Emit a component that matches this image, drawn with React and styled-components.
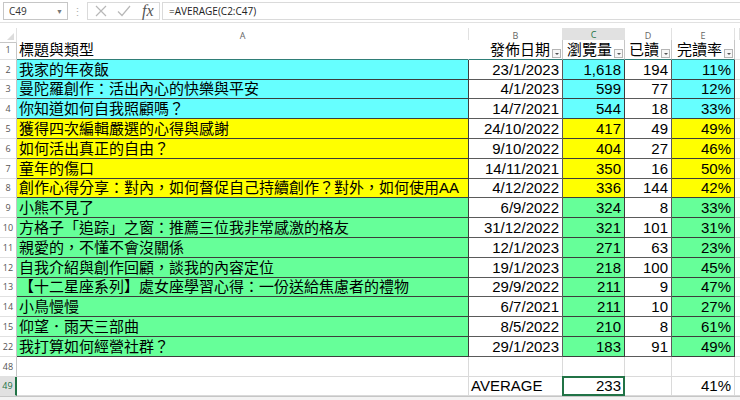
import React from "react";
import styled, { createGlobalStyle, css } from "styled-components";

const GlobalStyle = createGlobalStyle`
  html, body {
    margin: 0;
    padding: 0;
    background: #ffffff;
    overflow: hidden;
  }
  body {
    font-family: "Liberation Sans", "Noto Sans CJK TC", sans-serif;
  }
`;

const COLS = "17px 452px 94px 62px 47px 63px 1fr";
const ROW_H = "19.8px";

const FILLS = {
  cyan: "#66ffff",
  yellow: "#ffff00",
  green: "#66ff99",
};

const rows = [
  ["2", "我家的年夜飯", "23/1/2023", "1,618", "194", "11%", "cyan"],
  ["3", "曼陀羅創作：活出內心的快樂與平安", "4/1/2023", "599", "77", "12%", "cyan"],
  ["4", "你知道如何自我照顧嗎？", "14/7/2021", "544", "18", "33%", "cyan"],
  ["5", "獲得四次編輯嚴選的心得與感謝", "24/10/2022", "417", "49", "49%", "yellow"],
  ["6", "如何活出真正的自由？", "9/10/2022", "404", "27", "46%", "yellow"],
  ["7", "童年的傷口", "14/11/2021", "350", "16", "50%", "yellow"],
  ["8", "創作心得分享：對內，如何督促自己持續創作？對外，如何使用AA", "4/12/2022", "336", "144", "42%", "yellow"],
  ["9", "小熊不見了", "6/9/2022", "324", "8", "33%", "green"],
  ["10", "方格子「追踪」之窗：推薦三位我非常感激的格友", "31/12/2022", "321", "101", "31%", "green"],
  ["11", "親愛的，不懂不會沒關係", "12/1/2023", "271", "63", "23%", "green"],
  ["12", "自我介紹與創作回顧，談我的內容定位", "19/1/2023", "218", "100", "45%", "green"],
  ["13", "【十二星座系列】處女座學習心得：一份送給焦慮者的禮物", "29/9/2022", "211", "9", "47%", "green"],
  ["14", "小鳥慢慢", "6/7/2021", "211", "10", "27%", "green"],
  ["15", "仰望．雨天三部曲", "8/5/2022", "210", "8", "61%", "green"],
  ["22", "我打算如何經營社群？", "29/1/2023", "183", "91", "49%", "green"],
];

/* ---------- formula bar ---------- */

const Toolbar = styled.div`
  display: flex;
  align-items: center;
  height: 23px;
  padding: 0 0 0 3px;
  box-sizing: border-box;
  border-bottom: 1px solid #e1e1e1;
  background: #ffffff;
  font-family: "Open Sans", "Liberation Sans", sans-serif;
`;

const NameBox = styled.div`
  display: flex;
  align-items: center;
  justify-content: space-between;
  width: 65px;
  height: 18px;
  box-sizing: border-box;
  border: 1px solid #c6c6c6;
  padding: 0 4px 0 5px;
  font-size: 10px;
  color: #333;
`;

const Arrow = styled.span`
  font-size: 7px;
  color: #777;
`;

const Dots = styled.div`
  width: 19px;
  text-align: center;
  color: #b0b0b0;
  font-size: 11px;
`;

const FxGroup = styled.div`
  display: flex;
  align-items: center;
  gap: 10px;
  width: 73px;
  height: 18px;
  box-sizing: border-box;
  border: 1px solid #dadada;
  padding: 0 0 0 7px;
`;

const Fx = styled.span`
  font-family: "Liberation Serif", serif;
  font-style: italic;
  font-size: 16px;
  color: #555;
  line-height: 1;
  margin-left: 1px;
`;

const FormulaInput = styled.div`
  flex: 1;
  display: flex;
  align-items: center;
  height: 18px;
  box-sizing: border-box;
  border: 1px solid #dadada;
  border-right: none;
  margin-left: 2px;
  padding-left: 6px;
  font-size: 10px;
  color: #222;
`;

/* ---------- sheet ---------- */

const Spacer = styled.div`
  height: 5px;
`;

const Row = styled.div`
  display: grid;
  grid-template-columns: ${COLS};
  height: ${(p) => p.$h || ROW_H};
`;

const ColHead = styled.div`
  display: flex;
  align-items: center;
  justify-content: center;
  box-sizing: border-box;
  border-right: 1px solid #e1e1e1;
  border-bottom: 1px solid #c6c6c6;
  font-family: "Open Sans", "Liberation Sans", sans-serif;
  font-size: 9px;
  color: #666;
  ${(p) =>
    p.$active &&
    css`
      background: #e1e1e1;
      color: #217346;
      border-bottom: 2px solid #217346;
    `}
`;

const Corner = styled(ColHead)`
  position: relative;
  &::after {
    content: "";
    position: absolute;
    right: 2px;
    bottom: 2px;
    border-left: 7px solid transparent;
    border-bottom: 7px solid #dcdcdc;
  }
`;

const RowHead = styled.div`
  display: flex;
  align-items: flex-end;
  justify-content: center;
  padding-bottom: 3px;
  box-sizing: border-box;
  border-right: 1px solid #c6c6c6;
  border-bottom: 1px solid #e1e1e1;
  font-family: "Open Sans", "Liberation Sans", sans-serif;
  font-size: 9px;
  color: #555;
  ${(p) =>
    p.$active &&
    css`
      background: #e1e1e1;
      color: #217346;
      border-right: 2px solid #217346;
    `}
`;

const Cell = styled.div`
  position: relative;
  display: flex;
  align-items: flex-end;
  justify-content: ${(p) => (p.$right ? "flex-end" : "flex-start")};
  box-sizing: border-box;
  padding: 0 ${(p) => (p.$pr != null ? p.$pr : 3)}px 0 2px;
  overflow: hidden;
  white-space: nowrap;
  font-size: 15px;
  line-height: 18px;
  color: #000;
  background: ${(p) => (p.$fill ? FILLS[p.$fill] : "#ffffff")};
  border-right: 1px solid ${(p) => p.$line || "#3c3c3c"};
  border-bottom: 1px solid ${(p) => p.$bottom || p.$line || "#3c3c3c"};
`;

const FilterButton = styled.span`
  position: absolute;
  right: 1px;
  bottom: 1px;
  width: 9px;
  height: 9px;
  box-sizing: border-box;
  border: 1px solid #b5b5b5;
  background: #f7f7f7;
  &::after {
    content: "";
    position: absolute;
    left: 2px;
    top: 3px;
    border-left: 2px solid transparent;
    border-right: 2px solid transparent;
    border-top: 2px solid #555;
  }
`;

const Selected = styled.div`
  position: absolute;
  inset: -1px -1px -1px -1px;
  border: 2px solid #217346;
  pointer-events: none;
`;

const TabBar = styled.div`
  height: 6px;
  border-top: 1px solid #c6c6c6;
  background: #f3f3f3;
`;

function XIcon() {
  return (
    <svg width="12" height="12" viewBox="0 0 12 12">
      <path d="M1 1 L11 11 M11 1 L1 11" stroke="#b8b8b8" strokeWidth="1.2" fill="none" />
    </svg>
  );
}

function CheckIcon() {
  return (
    <svg width="14" height="12" viewBox="0 0 14 12">
      <path d="M1 6.5 L5 10.5 L13 1" stroke="#b8b8b8" strokeWidth="1.2" fill="none" />
    </svg>
  );
}

function HeaderCell({ children }) {
  return (
    <Cell $right $pr={12} $line="#c6c6c6" $bottom="#2f7f78">
      {children}
      <FilterButton />
    </Cell>
  );
}

export default function App() {
  return (
    <>
      <GlobalStyle />
      <Toolbar>
        <NameBox>
          C49
          <Arrow>▼</Arrow>
        </NameBox>
        <Dots>⋮</Dots>
        <FxGroup>
          <XIcon />
          <CheckIcon />
          <Fx>fx</Fx>
        </FxGroup>
        <FormulaInput>=AVERAGE(C2:C47)</FormulaInput>
      </Toolbar>
      <Spacer />
      <Row $h="12px">
        <Corner />
        <ColHead>A</ColHead>
        <ColHead>B</ColHead>
        <ColHead $active>C</ColHead>
        <ColHead>D</ColHead>
        <ColHead>E</ColHead>
        <ColHead />
      </Row>
      <Row>
        <RowHead>1</RowHead>
        <Cell $line="#ffffff" $bottom="#2f7f78">標題與類型</Cell>
        <HeaderCell>發佈日期</HeaderCell>
        <HeaderCell>瀏覽量</HeaderCell>
        <HeaderCell>已讀</HeaderCell>
        <HeaderCell>完讀率</HeaderCell>
        <Cell $line="#e1e1e1" />
      </Row>
      {rows.map(([n, title, date, views, read, rate, fill]) => (
        <Row key={n}>
          <RowHead>{n}</RowHead>
          <Cell $fill={fill}>{title}</Cell>
          <Cell $right $line="#5a5a5a">{date}</Cell>
          <Cell $right $fill={fill}>{views}</Cell>
          <Cell $right $line="#5a5a5a">{read}</Cell>
          <Cell $right $fill={fill}>{rate}</Cell>
          <Cell $line="#e1e1e1" />
        </Row>
      ))}
      <Row>
        <RowHead>48</RowHead>
        <Cell $line="#dadada" />
        <Cell $line="#dadada" />
        <Cell $line="#dadada" />
        <Cell $line="#dadada" />
        <Cell $line="#dadada" />
        <Cell $line="#dadada" />
      </Row>
      <Row>
        <RowHead $active>49</RowHead>
        <Cell $line="#dadada" />
        <Cell $line="#dadada">AVERAGE</Cell>
        <Cell $right $line="#dadada" style={{ overflow: "visible" }}>
          233
          <Selected />
        </Cell>
        <Cell $line="#dadada" />
        <Cell $right $line="#dadada">41%</Cell>
        <Cell $line="#dadada" />
      </Row>
      <TabBar />
    </>
  );
}
